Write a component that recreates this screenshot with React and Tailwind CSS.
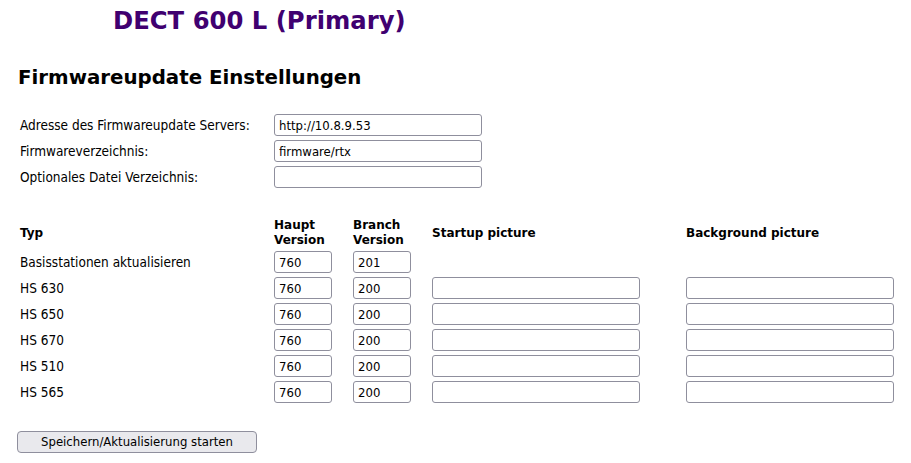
import React from 'react';

const rows = [
  { typ: 'Basisstationen aktualisieren', haupt: '760', branch: '201', pics: false },
  { typ: 'HS 630', haupt: '760', branch: '200', pics: true },
  { typ: 'HS 650', haupt: '760', branch: '200', pics: true },
  { typ: 'HS 670', haupt: '760', branch: '200', pics: true },
  { typ: 'HS 510', haupt: '760', branch: '200', pics: true },
  { typ: 'HS 565', haupt: '760', branch: '200', pics: true },
];

const inputCls =
  "h-[22px] border border-[#8f8f9d] rounded-[3px] bg-white px-[4px] text-[13px] text-black outline-none font-['DejaVu_Sans_Condensed','DejaVu_Sans',sans-serif]";

function Field({ value = '', width }) {
  return <input readOnly defaultValue={value} className={`${inputCls} ${width}`} />;
}

export default function App() {
  return (
    <div className="w-[911px] h-[463px] bg-white text-black font-['DejaVu_Sans',Verdana,sans-serif] text-[12px] relative">
      <h1 className="pl-[113px] pt-[6px] text-[24.3px] leading-[30px] font-bold text-[#400070]">
        DECT 600 L (Primary)
      </h1>

      <h2 className="pl-[18px] mt-[30px] text-[19.8px] leading-[24px] font-bold">
        Firmwareupdate Einstellungen
      </h2>

      <div className="mt-[24px] pl-[20px] flex flex-col gap-[4px] font-['DejaVu_Sans_Condensed','DejaVu_Sans',sans-serif] text-[13.5px]">
        {[
          ['Adresse des Firmwareupdate Servers:', 'http://10.8.9.53'],
          ['Firmwareverzeichnis:', 'firmware/rtx'],
          ['Optionales Datei Verzeichnis:', ''],
        ].map(([label, val]) => (
          <div key={label} className="flex items-center">
            <span className="w-[254px]">{label}</span>
            <Field value={val} width="w-[208px]" />
          </div>
        ))}
      </div>

      <div className="mt-[30px] pl-[20px]">
        <div className="flex items-center h-[30px] font-bold text-[12px] leading-[15px]">
          <span className="w-[254px]">Typ</span>
          <span className="w-[79px]">Haupt<br />Version</span>
          <span className="w-[79px]">Branch<br />Version</span>
          <span className="w-[254px]">Startup picture</span>
          <span>Background picture</span>
        </div>
        <div className="mt-[3px] flex flex-col gap-[4px] font-['DejaVu_Sans_Condensed','DejaVu_Sans',sans-serif] text-[13.5px]">
          {rows.map((r) => (
            <div key={r.typ} className="flex items-center">
              <span className="w-[254px]">{r.typ}</span>
              <Field value={r.haupt} width="w-[58px]" />
              <div className="w-[21px]" />
              <Field value={r.branch} width="w-[58px]" />
              <div className="w-[21px]" />
              {r.pics && (
                <>
                  <Field width="w-[208px]" />
                  <div className="w-[46px]" />
                  <Field width="w-[208px]" />
                </>
              )}
            </div>
          ))}
        </div>
      </div>

      <div className="mt-[28px] pl-[17px]">
        <button className="w-[240px] h-[22px] bg-[#e9e9ed] border border-[#8f8f9d] rounded-[4px] text-[13px] font-['DejaVu_Sans_Condensed','DejaVu_Sans',sans-serif]">
          Speichern/Aktualisierung starten
        </button>
      </div>
    </div>
  );
}
